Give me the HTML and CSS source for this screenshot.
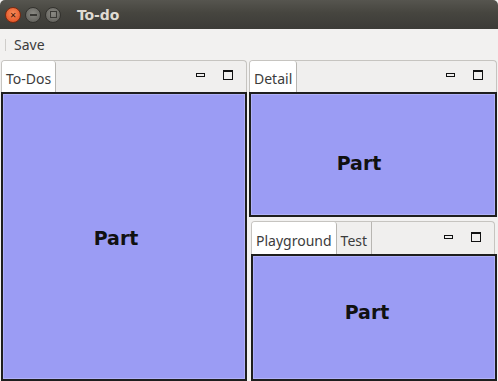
FILE: index.html
```html
<!DOCTYPE html>
<html lang="en">
<head>
  <meta charset="UTF-8" />
  <title>To-do</title>
  <link rel="stylesheet" href="styles.css">
</head>
<body>
  <!-- Window title bar -->
  <div class="titlebar">
    <div class="win-buttons">
      <span class="win-btn close">&#x2715;</span>
      <span class="win-btn min"><span class="min-bar"></span></span>
      <span class="win-btn max"><span class="max-box"></span></span>
    </div>
    <span class="title">To-do</span>
  </div>

  <!-- Toolbar -->
  <div class="toolbar">
    <span class="grip"></span>
    <span class="tool">Save</span>
  </div>

  <div class="workbench">
    <!-- Left stack -->
    <div class="stack left">
      <div class="stack-head">
        <div class="tab active">To-Dos</div>
        <div class="stack-ctrls">
          <span class="ctl-min"></span>
          <span class="ctl-max"></span>
        </div>
      </div>
      <div class="part part-left">Part</div>
    </div>

    <div class="column">
      <!-- Detail stack -->
      <div class="stack top">
        <div class="stack-head">
          <div class="tab active">Detail</div>
          <div class="stack-ctrls">
            <span class="ctl-min"></span>
            <span class="ctl-max"></span>
          </div>
        </div>
        <div class="part part-detail">Part</div>
      </div>

      <!-- Playground stack -->
      <div class="stack bottom">
        <div class="stack-head">
          <div class="tab active">Playground</div>
          <div class="tab">Test</div>
          <div class="stack-ctrls">
            <span class="ctl-min"></span>
            <span class="ctl-max"></span>
          </div>
        </div>
        <div class="part part-play">Part</div>
      </div>
    </div>
  </div>
</body>
</html>
```

FILE: styles.css
```css
body {
  margin: 0;
  width: 498px;
  height: 381px;
  overflow: hidden;
  background-color: #f2f1f0;
  font-family: "Noto Sans", "DejaVu Sans", sans-serif;
  color: #3c3c3c;
}

/* Title bar */
.titlebar {
  height: 29px;
  display: flex;
  align-items: center;
  background: linear-gradient(#56554f, #46453f 45%, #3c3b37);
  border-radius: 5px 5px 0 0;
}

.win-buttons {
  display: flex;
  gap: 4px;
  padding-left: 5px;
}

.win-btn {
  width: 14px;
  height: 14px;
  border-radius: 50%;
  display: flex;
  align-items: center;
  justify-content: center;
  background: radial-gradient(circle at 50% 40%, #8a8983, #5b5a55);
  border: 1px solid #33322e;
}

.win-btn.close {
  background: radial-gradient(circle at 50% 40%, #f98e5b, #e0461a);
  border-color: #7a2a10;
  color: #3a1508;
  font-size: 8px;
  font-weight: bold;
  line-height: 1;
}

.min-bar {
  width: 7px;
  height: 2px;
  background-color: #3a3935;
}

.max-box {
  width: 5px;
  height: 5px;
  border: 1px solid #3a3935;
}

.title {
  margin-left: 16px;
  font-size: 14px;
  font-weight: bold;
  color: #dfdbd2;
  font-family: "DejaVu Sans", sans-serif;
  letter-spacing: -0.1px;
}

/* Toolbar */
.toolbar {
  height: 31px;
  display: flex;
  align-items: center;
}

.grip {
  width: 1px;
  height: 12px;
  margin-left: 5px;
  background-color: #cfcdca;
}

.tool {
  margin-left: 8px;
  font-size: 14px;
  color: #3c3c3c;
}

/* Stacks */
.workbench {
  display: flex;
  gap: 2px;
  padding-left: 1px;
  height: 321px;
}

.stack {
  display: flex;
  flex-direction: column;
}

.stack.left {
  width: 246px;
}

.column {
  width: 248px;
  display: flex;
  flex-direction: column;
  gap: 4px;
}

.stack.top {
  height: 157px;
}

.stack.bottom {
  flex: 1;
  margin-left: 2px;
}

.stack-head {
  height: 31px;
  display: flex;
  border: 1px solid #c6c4c0;
  border-bottom: none;
  border-radius: 4px 4px 0 0;
  background-color: #f0efee;
}

.stack.bottom .stack-head {
  height: 32px;
  margin-right: 2px;
}

.tab {
  display: flex;
  align-items: center;
  padding: 4px 4px 0 4px;
  font-size: 14px;
  color: #3c3c3c;
  border-right: 1px solid #b8b6b2;
}

.tab.active {
  background-color: #ffffff;
  border-radius: 3px 3px 0 0;
}

.stack-ctrls {
  margin-left: auto;
  display: flex;
  align-items: center;
  gap: 18px;
  padding-right: 13px;
  padding-bottom: 3px;
}

.ctl-min {
  width: 7px;
  height: 2px;
  border: 1px solid #111;
}

.ctl-max {
  width: 8px;
  height: 7px;
  border: 1px solid #111;
  border-top-width: 2px;
}

/* Parts */
.part {
  flex: 1;
  display: flex;
  align-items: center;
  justify-content: center;
  background-color: #9b9cf4;
  border: 2px solid #1e1e1e;
  box-shadow: inset 0 0 0 1px #b0b1f8;
  font-family: "DejaVu Sans", sans-serif;
  font-weight: bold;
  font-size: 19px;
  color: #111111;
}

.part-left {
  padding: 2px 16px 0 0;
}

.part-detail {
  padding: 16px 28px 0 0;
}

.part-play {
  padding: 0 14px 12px 0;
}
```
